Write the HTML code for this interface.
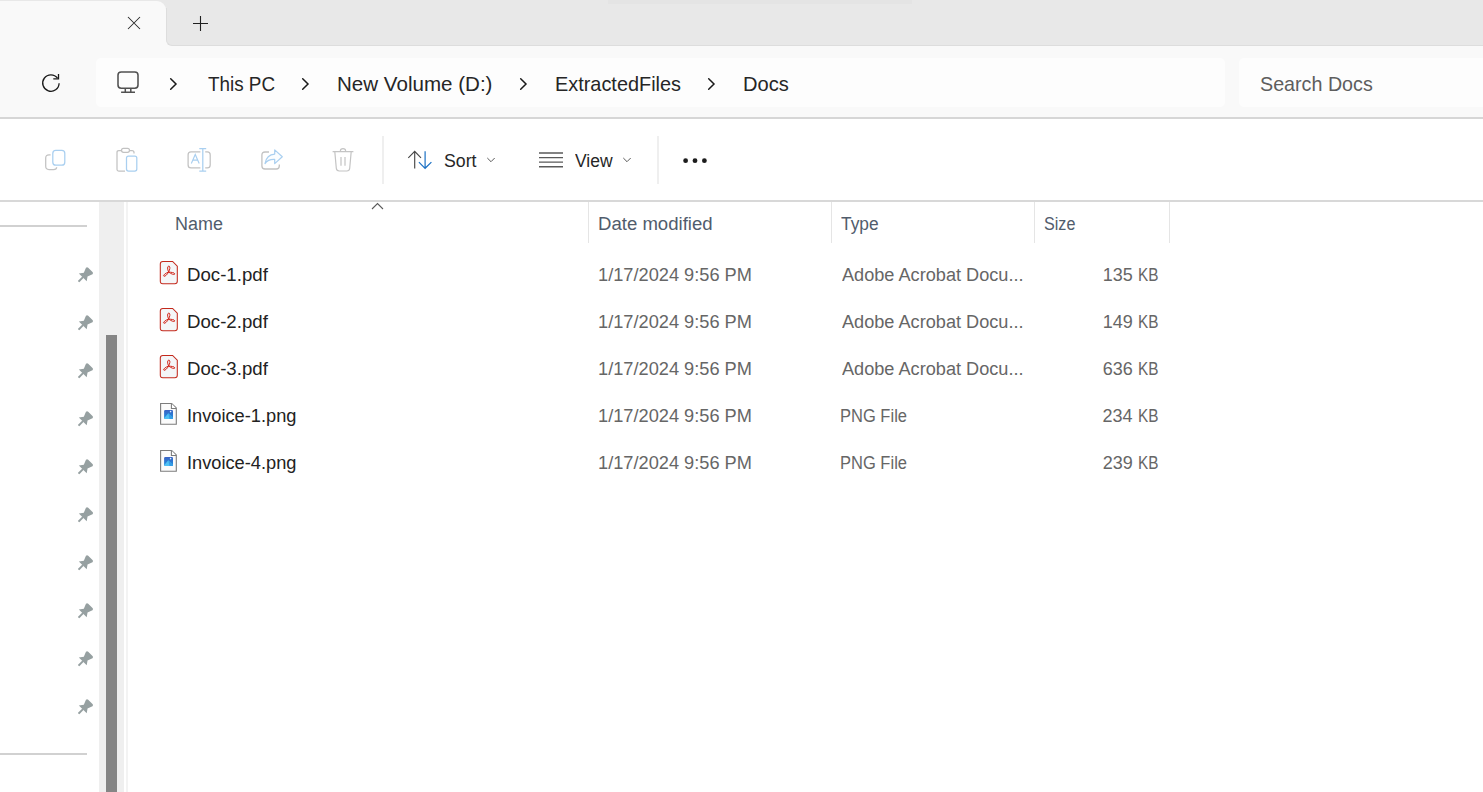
<!DOCTYPE html>
<html><head><meta charset="utf-8"><style>
html,body{margin:0;padding:0}
body{width:1483px;height:792px;overflow:hidden;position:relative;background:#ffffff;font-family:"Liberation Sans",sans-serif}
.a{position:absolute}
.t{position:absolute;white-space:nowrap;transform-origin:0 0}
.ic{position:absolute;overflow:visible}
</style></head><body>
<!-- tab strip -->
<div class="a" style="left:0;top:0;width:1483px;height:118px;background:#f9f9f9"></div>
<div class="a" style="left:0;top:0;width:1483px;height:10px;background:#e8e8e8"></div>
<div class="a" style="left:608px;top:0;width:304px;height:4px;background:#e4e4e4"></div>
<div class="a" style="left:166px;top:8px;width:1317px;height:37px;background:#e8e8e8;border-left:1px solid #dddddd;border-bottom:1px solid #dddddd;border-bottom-left-radius:6px"></div>
<div class="a" style="left:0;top:1px;width:166px;height:45px;background:#f9f9f9;border-top-right-radius:9px"></div>
<svg class="ic" style="left:127px;top:15.5px" width="14" height="14" viewBox="0 0 14 14"><path d="M1 1 L13 13 M13 1 L1 13" stroke="#2a2a2a" stroke-width="1.05"/></svg>
<svg class="ic" style="left:192px;top:15px" width="17" height="17" viewBox="0 0 17 17"><path d="M8.5 1 V16 M1 8.5 H16" stroke="#1f1f1f" stroke-width="1.1"/></svg>
<!-- address row -->
<svg class="ic" style="left:41px;top:73px" width="20" height="20" viewBox="0 0 20 20"><path d="M18.1 10.2 A8.2 8.2 0 1 1 16.5 5.2" fill="none" stroke="#1a1a1a" stroke-width="1.3"/><path d="M12.3 5.9 H17.5 V1" fill="none" stroke="#1a1a1a" stroke-width="1.3"/></svg>
<div class="a" style="left:96px;top:58px;width:1129px;height:49px;background:#fdfdfd;border-radius:5px"></div>
<div class="a" style="left:1239px;top:58px;width:260px;height:49px;background:#fdfdfd;border-radius:5px"></div>
<svg class="ic" style="left:116px;top:70px" width="24" height="24" viewBox="0 0 24 24"><rect x="2" y="1.9" width="20" height="16.4" rx="3.2" fill="none" stroke="#515151" stroke-width="1.55"/><path d="M9.3 18.3 V22 M14.8 18.3 V22 M5.1 22.3 H19" stroke="#515151" stroke-width="1.5"/></svg>
<svg class="ic" style="left:169px;top:77px" width="9" height="14" viewBox="0 0 9 14"><path d="M1.7 1.7 L7 7 L1.7 12.3" fill="none" stroke="#1a1a1a" stroke-width="1.5" stroke-linecap="round"/></svg><svg class="ic" style="left:301px;top:77px" width="9" height="14" viewBox="0 0 9 14"><path d="M1.7 1.7 L7 7 L1.7 12.3" fill="none" stroke="#1a1a1a" stroke-width="1.5" stroke-linecap="round"/></svg><svg class="ic" style="left:519px;top:77px" width="9" height="14" viewBox="0 0 9 14"><path d="M1.7 1.7 L7 7 L1.7 12.3" fill="none" stroke="#1a1a1a" stroke-width="1.5" stroke-linecap="round"/></svg><svg class="ic" style="left:707px;top:77px" width="9" height="14" viewBox="0 0 9 14"><path d="M1.7 1.7 L7 7 L1.7 12.3" fill="none" stroke="#1a1a1a" stroke-width="1.5" stroke-linecap="round"/></svg>
<div class="a" style="left:0;top:117px;width:1483px;height:2px;background:#d6d6d6"></div>
<!-- command bar -->
<div class="a" style="left:0;top:119px;width:1483px;height:81px;background:#ffffff"></div>
<svg class="ic" style="left:43px;top:148px" width="24" height="24" viewBox="0 0 24 24"><path d="M7.6 6.8 H6 Q2.7 6.8 2.7 10 V18.3 Q2.7 21.5 6 21.5 H10.5 Q13.6 21.5 13.7 19.2" fill="none" stroke="#c2c2c2" stroke-width="1.25"/><rect x="9.8" y="2.4" width="12" height="14.8" rx="3" fill="none" stroke="#a9cff0" stroke-width="1.25"/></svg>
<svg class="ic" style="left:115px;top:146px" width="24" height="27" viewBox="0 0 24 27"><path d="M6 4.5 H3.8 Q2 4.5 2 6.5 V23.5 Q2 25 3.8 25 H10" fill="none" stroke="#c2c2c2" stroke-width="1.25"/><path d="M15 4.5 H17 Q19 4.5 19 6.5 V7.4" fill="none" stroke="#c2c2c2" stroke-width="1.25"/><rect x="6.5" y="2.3" width="8" height="4" rx="2" fill="none" stroke="#c2c2c2" stroke-width="1.25"/><rect x="11.5" y="10" width="10.3" height="15" rx="2" fill="none" stroke="#a9cff0" stroke-width="1.25"/></svg>
<svg class="ic" style="left:186px;top:147px" width="26" height="26" viewBox="0 0 26 26"><path d="M14.4 4.9 H5 Q2.1 4.9 2.1 7.8 V17.9 Q2.1 20.8 5 20.8 H14.4 M19.2 4.9 H21.3 Q24.2 4.9 24.2 7.8 V17.9 Q24.2 20.8 21.3 20.8 H19.2" fill="none" stroke="#c2c2c2" stroke-width="1.25"/><path d="M16.8 1.6 V24.2 M13.3 1.6 H20.2 M13.3 24.2 H20.2" stroke="#a9cff0" stroke-width="1.25"/><path d="M5.3 16.4 L9.25 7.5 L13.2 16.4 M6.9 13.1 H11.6" fill="none" stroke="#a9cff0" stroke-width="1.15"/></svg>
<svg class="ic" style="left:259px;top:147px" width="26" height="26" viewBox="0 0 26 26"><path d="M10 5 H6 Q2.9 5 2.9 8 V19 Q2.9 22 6 22 H17.3 Q20.3 22 20.3 19 V17.5" fill="none" stroke="#c2c2c2" stroke-width="1.3"/><path d="M6 16.6 C7 11 10 7.3 15.7 7.1 V2.9 L23.3 9.7 L15.7 16.6 V12.4 C11 12.2 8 13.5 6 16.6 Z" fill="#fafdff" stroke="#a9cff0" stroke-width="1.2" stroke-linejoin="round"/></svg>
<svg class="ic" style="left:331px;top:146px" width="24" height="27" viewBox="0 0 24 27"><path d="M1.6 5.6 H22.4 M9.4 5.6 V4.8 Q9.4 2.6 12 2.6 Q14.6 2.6 14.6 4.8 V5.6 M3.8 5.6 L5.3 22.3 Q5.6 25 8.2 25 H15.8 Q18.4 25 18.7 22.3 L20.2 5.6 M10 11 V19.8 M14 11 V19.8" fill="none" stroke="#c4c4c4" stroke-width="1.2"/></svg>
<div class="a" style="left:382px;top:136px;width:2px;height:48px;background:#efefef"></div>
<svg class="ic" style="left:406px;top:149px" width="28" height="22" viewBox="0 0 28 22"><path d="M8.7 19.6 V2.6 M2.3 8.8 L8.7 2.4 L15 8.8" fill="none" stroke="#474747" stroke-width="1.15"/><path d="M19.1 2.2 V19 M12.9 13.1 L19.1 19.3 L25.4 13.1" fill="none" stroke="#1c71c4" stroke-width="1.2"/></svg>
<svg class="ic" style="left:486px;top:156px" width="10" height="8" viewBox="0 0 10 8"><path d="M1.3 2 L5 5.7 L8.7 2" fill="none" stroke="#505050" stroke-width="0.95"/></svg>
<svg class="ic" style="left:538px;top:150px" width="26" height="20" viewBox="0 0 26 20"><path d="M1 3 H25 M1 7.6 H25 M1 12.1 H25 M1 16.7 H25" stroke="#5a5a5a" stroke-width="1.4"/></svg>
<svg class="ic" style="left:622px;top:156px" width="10" height="8" viewBox="0 0 10 8"><path d="M1.3 2 L5 5.7 L8.7 2" fill="none" stroke="#505050" stroke-width="0.95"/></svg>
<div class="a" style="left:657px;top:136px;width:2px;height:48px;background:#efefef"></div>
<svg class="ic" style="left:680px;top:155px" width="30" height="12" viewBox="0 0 30 12"><circle cx="5.6" cy="5.7" r="2.4" fill="#1c1c1c"/><circle cx="15" cy="5.7" r="2.4" fill="#1c1c1c"/><circle cx="24.4" cy="5.7" r="2.4" fill="#1c1c1c"/></svg>
<div class="a" style="left:0;top:200px;width:1483px;height:2px;background:#d8d8d8"></div>
<!-- nav pane -->
<div class="a" style="left:0;top:225px;width:87px;height:2px;background:#d1d1d1"></div>
<div class="a" style="left:0;top:753px;width:87px;height:2px;background:#d1d1d1"></div>
<svg class="ic" style="left:76px;top:265px" width="18" height="18" viewBox="0 0 18 18"><g transform="translate(7.0 12.2) rotate(45) scale(1.05)" fill="#96a0a1"><path d="M-4.4 -8.4 Q-4.4 -9.9 -2.9 -9.9 L2.9 -9.9 Q4.4 -9.9 4.4 -8.4 L2.5 -3.6 L5.3 0.3 L-5.3 0.3 L-2.5 -3.6 Z"/><path d="M-0.9 0 L0.9 0 L0.9 5.8 Q0 6.6 -0.9 5.8 Z"/></g></svg><svg class="ic" style="left:76px;top:313px" width="18" height="18" viewBox="0 0 18 18"><g transform="translate(7.0 12.2) rotate(45) scale(1.05)" fill="#96a0a1"><path d="M-4.4 -8.4 Q-4.4 -9.9 -2.9 -9.9 L2.9 -9.9 Q4.4 -9.9 4.4 -8.4 L2.5 -3.6 L5.3 0.3 L-5.3 0.3 L-2.5 -3.6 Z"/><path d="M-0.9 0 L0.9 0 L0.9 5.8 Q0 6.6 -0.9 5.8 Z"/></g></svg><svg class="ic" style="left:76px;top:361px" width="18" height="18" viewBox="0 0 18 18"><g transform="translate(7.0 12.2) rotate(45) scale(1.05)" fill="#96a0a1"><path d="M-4.4 -8.4 Q-4.4 -9.9 -2.9 -9.9 L2.9 -9.9 Q4.4 -9.9 4.4 -8.4 L2.5 -3.6 L5.3 0.3 L-5.3 0.3 L-2.5 -3.6 Z"/><path d="M-0.9 0 L0.9 0 L0.9 5.8 Q0 6.6 -0.9 5.8 Z"/></g></svg><svg class="ic" style="left:76px;top:409px" width="18" height="18" viewBox="0 0 18 18"><g transform="translate(7.0 12.2) rotate(45) scale(1.05)" fill="#96a0a1"><path d="M-4.4 -8.4 Q-4.4 -9.9 -2.9 -9.9 L2.9 -9.9 Q4.4 -9.9 4.4 -8.4 L2.5 -3.6 L5.3 0.3 L-5.3 0.3 L-2.5 -3.6 Z"/><path d="M-0.9 0 L0.9 0 L0.9 5.8 Q0 6.6 -0.9 5.8 Z"/></g></svg><svg class="ic" style="left:76px;top:457px" width="18" height="18" viewBox="0 0 18 18"><g transform="translate(7.0 12.2) rotate(45) scale(1.05)" fill="#96a0a1"><path d="M-4.4 -8.4 Q-4.4 -9.9 -2.9 -9.9 L2.9 -9.9 Q4.4 -9.9 4.4 -8.4 L2.5 -3.6 L5.3 0.3 L-5.3 0.3 L-2.5 -3.6 Z"/><path d="M-0.9 0 L0.9 0 L0.9 5.8 Q0 6.6 -0.9 5.8 Z"/></g></svg><svg class="ic" style="left:76px;top:505px" width="18" height="18" viewBox="0 0 18 18"><g transform="translate(7.0 12.2) rotate(45) scale(1.05)" fill="#96a0a1"><path d="M-4.4 -8.4 Q-4.4 -9.9 -2.9 -9.9 L2.9 -9.9 Q4.4 -9.9 4.4 -8.4 L2.5 -3.6 L5.3 0.3 L-5.3 0.3 L-2.5 -3.6 Z"/><path d="M-0.9 0 L0.9 0 L0.9 5.8 Q0 6.6 -0.9 5.8 Z"/></g></svg><svg class="ic" style="left:76px;top:553px" width="18" height="18" viewBox="0 0 18 18"><g transform="translate(7.0 12.2) rotate(45) scale(1.05)" fill="#96a0a1"><path d="M-4.4 -8.4 Q-4.4 -9.9 -2.9 -9.9 L2.9 -9.9 Q4.4 -9.9 4.4 -8.4 L2.5 -3.6 L5.3 0.3 L-5.3 0.3 L-2.5 -3.6 Z"/><path d="M-0.9 0 L0.9 0 L0.9 5.8 Q0 6.6 -0.9 5.8 Z"/></g></svg><svg class="ic" style="left:76px;top:601px" width="18" height="18" viewBox="0 0 18 18"><g transform="translate(7.0 12.2) rotate(45) scale(1.05)" fill="#96a0a1"><path d="M-4.4 -8.4 Q-4.4 -9.9 -2.9 -9.9 L2.9 -9.9 Q4.4 -9.9 4.4 -8.4 L2.5 -3.6 L5.3 0.3 L-5.3 0.3 L-2.5 -3.6 Z"/><path d="M-0.9 0 L0.9 0 L0.9 5.8 Q0 6.6 -0.9 5.8 Z"/></g></svg><svg class="ic" style="left:76px;top:649px" width="18" height="18" viewBox="0 0 18 18"><g transform="translate(7.0 12.2) rotate(45) scale(1.05)" fill="#96a0a1"><path d="M-4.4 -8.4 Q-4.4 -9.9 -2.9 -9.9 L2.9 -9.9 Q4.4 -9.9 4.4 -8.4 L2.5 -3.6 L5.3 0.3 L-5.3 0.3 L-2.5 -3.6 Z"/><path d="M-0.9 0 L0.9 0 L0.9 5.8 Q0 6.6 -0.9 5.8 Z"/></g></svg><svg class="ic" style="left:76px;top:697px" width="18" height="18" viewBox="0 0 18 18"><g transform="translate(7.0 12.2) rotate(45) scale(1.05)" fill="#96a0a1"><path d="M-4.4 -8.4 Q-4.4 -9.9 -2.9 -9.9 L2.9 -9.9 Q4.4 -9.9 4.4 -8.4 L2.5 -3.6 L5.3 0.3 L-5.3 0.3 L-2.5 -3.6 Z"/><path d="M-0.9 0 L0.9 0 L0.9 5.8 Q0 6.6 -0.9 5.8 Z"/></g></svg>
<div class="a" style="left:99px;top:202px;width:25px;height:590px;background:#efefef"></div>
<div class="a" style="left:106px;top:335px;width:11px;height:457px;background:#858585"></div>
<div class="a" style="left:126px;top:202px;width:2px;height:590px;background:#f3f3f3"></div>
<!-- header -->
<svg class="ic" style="left:371px;top:202px" width="13" height="9" viewBox="0 0 13 9"><path d="M1 7 L6.5 1.5 L12 7" fill="none" stroke="#5a5a5a" stroke-width="1.1"/></svg>
<div class="a" style="left:588px;top:202px;width:1px;height:41px;background:#e5e5e5"></div>
<div class="a" style="left:831px;top:202px;width:1px;height:41px;background:#e5e5e5"></div>
<div class="a" style="left:1034px;top:202px;width:1px;height:41px;background:#e5e5e5"></div>
<div class="a" style="left:1169px;top:202px;width:1px;height:41px;background:#e5e5e5"></div>
<svg class="ic" style="left:159px;top:260px" width="20" height="26" viewBox="0 0 20 26"><path d="M3.8 1.5 H13.6 L18.3 6.2 V21.3 Q18.3 23.8 15.8 23.8 H3.8 Q1.3 23.8 1.3 21.3 V4 Q1.3 1.5 3.8 1.5 Z" fill="#f4f6f8" stroke="#c3291c" stroke-width="1.05"/><path d="M9.6 12 C8.3 9.2 8.2 6.1 9.8 6.1 C11.4 6.1 11.1 9.2 9.6 12 Z M9.6 12 C8.2 14.5 6.2 16.7 4.9 16.2 C3.8 15.6 5.6 13.6 9.6 12 Z M9.6 12 C12 12.4 15.6 12.4 15.7 13.8 C15.8 15.3 12.6 14.3 9.6 12 Z" fill="none" stroke="#d3271c" stroke-width="1"/></svg><svg class="ic" style="left:159px;top:307px" width="20" height="26" viewBox="0 0 20 26"><path d="M3.8 1.5 H13.6 L18.3 6.2 V21.3 Q18.3 23.8 15.8 23.8 H3.8 Q1.3 23.8 1.3 21.3 V4 Q1.3 1.5 3.8 1.5 Z" fill="#f4f6f8" stroke="#c3291c" stroke-width="1.05"/><path d="M9.6 12 C8.3 9.2 8.2 6.1 9.8 6.1 C11.4 6.1 11.1 9.2 9.6 12 Z M9.6 12 C8.2 14.5 6.2 16.7 4.9 16.2 C3.8 15.6 5.6 13.6 9.6 12 Z M9.6 12 C12 12.4 15.6 12.4 15.7 13.8 C15.8 15.3 12.6 14.3 9.6 12 Z" fill="none" stroke="#d3271c" stroke-width="1"/></svg><svg class="ic" style="left:159px;top:354px" width="20" height="26" viewBox="0 0 20 26"><path d="M3.8 1.5 H13.6 L18.3 6.2 V21.3 Q18.3 23.8 15.8 23.8 H3.8 Q1.3 23.8 1.3 21.3 V4 Q1.3 1.5 3.8 1.5 Z" fill="#f4f6f8" stroke="#c3291c" stroke-width="1.05"/><path d="M9.6 12 C8.3 9.2 8.2 6.1 9.8 6.1 C11.4 6.1 11.1 9.2 9.6 12 Z M9.6 12 C8.2 14.5 6.2 16.7 4.9 16.2 C3.8 15.6 5.6 13.6 9.6 12 Z M9.6 12 C12 12.4 15.6 12.4 15.7 13.8 C15.8 15.3 12.6 14.3 9.6 12 Z" fill="none" stroke="#d3271c" stroke-width="1"/></svg><svg class="ic" style="left:159px;top:401px" width="20" height="26" viewBox="0 0 20 26"><path d="M1.6 2.5 H12.7 L17.3 7.1 V23.3 H1.6 Z" fill="#fbfbfb" stroke="#7c7c7c" stroke-width="1.1"/><path d="M12.4 2.6 V7.4 H17.2" fill="#ffffff" stroke="#7c7c7c" stroke-width="1.05"/><defs><linearGradient id="pg" x1="0" y1="0" x2="0" y2="1"><stop offset="0" stop-color="#3a62c4"/><stop offset="1" stop-color="#1f8fe0"/></linearGradient></defs><rect x="5.1" y="9" width="8.9" height="8.9" rx="1.2" fill="url(#pg)"/><path d="M5.3 17 L9.3 12.2 L13.9 16.6 V17.9 H5.6 Z" fill="#4fc0f3"/><path d="M9.3 12.2 L13.9 16.6 V17.9 H10.5 Z" fill="#2a8fe0" opacity="0.7"/><circle cx="11.6" cy="10.6" r="0.8" fill="#dbefff"/></svg><svg class="ic" style="left:159px;top:448px" width="20" height="26" viewBox="0 0 20 26"><path d="M1.6 2.5 H12.7 L17.3 7.1 V23.3 H1.6 Z" fill="#fbfbfb" stroke="#7c7c7c" stroke-width="1.1"/><path d="M12.4 2.6 V7.4 H17.2" fill="#ffffff" stroke="#7c7c7c" stroke-width="1.05"/><defs><linearGradient id="pg" x1="0" y1="0" x2="0" y2="1"><stop offset="0" stop-color="#3a62c4"/><stop offset="1" stop-color="#1f8fe0"/></linearGradient></defs><rect x="5.1" y="9" width="8.9" height="8.9" rx="1.2" fill="url(#pg)"/><path d="M5.3 17 L9.3 12.2 L13.9 16.6 V17.9 H5.6 Z" fill="#4fc0f3"/><path d="M9.3 12.2 L13.9 16.6 V17.9 H10.5 Z" fill="#2a8fe0" opacity="0.7"/><circle cx="11.6" cy="10.6" r="0.8" fill="#dbefff"/></svg>
<div class="t" style="left:207.62px;top:73.22px;font-size:21px;line-height:21px;color:#262626;transform:scaleX(0.8980);">This PC</div><div class="t" style="left:337.15px;top:73.22px;font-size:21px;line-height:21px;color:#262626;transform:scaleX(0.9794);">New Volume (D:)</div><div class="t" style="left:554.81px;top:73.22px;font-size:21px;line-height:21px;color:#262626;transform:scaleX(0.9470);">ExtractedFiles</div><div class="t" style="left:742.59px;top:73.22px;font-size:21px;line-height:21px;color:#262626;transform:scaleX(0.9568);">Docs</div><div class="t" style="left:1259.91px;top:72.72px;font-size:21px;line-height:21px;color:#5e5e5e;transform:scaleX(0.9380);">Search Docs</div><div class="t" style="left:443.90px;top:151.56px;font-size:18px;line-height:18px;color:#262626;transform:scaleX(0.9831);">Sort</div><div class="t" style="left:575.11px;top:151.56px;font-size:18px;line-height:18px;color:#262626;transform:scaleX(0.9713);">View</div><div class="t" style="left:174.56px;top:214.76px;font-size:18px;line-height:18px;color:#515c6c;transform:scaleX(0.9974);">Name</div><div class="t" style="left:597.81px;top:214.76px;font-size:18px;line-height:18px;color:#515c6c;transform:scaleX(1.0318);">Date modified</div><div class="t" style="left:840.75px;top:214.76px;font-size:18px;line-height:18px;color:#515c6c;transform:scaleX(0.9630);">Type</div><div class="t" style="left:1043.77px;top:214.76px;font-size:18px;line-height:18px;color:#515c6c;transform:scaleX(0.8955);">Size</div><div class="t" style="left:186.91px;top:265.56px;font-size:18px;line-height:18px;color:#222222;transform:scaleX(1.0355);">Doc-1.pdf</div><div class="t" style="left:598.33px;top:265.56px;font-size:18px;line-height:18px;color:#666666;transform:scaleX(1.0120);">1/17/2024 9:56 PM</div><div class="t" style="left:841.50px;top:265.56px;font-size:18px;line-height:18px;color:#666666;transform:scaleX(1.0080);">Adobe Acrobat Docu...</div><div class="t" style="left:1102.70px;top:265.56px;font-size:18px;line-height:18px;color:#666666;">135</div><div class="t" style="left:1137.77px;top:265.56px;font-size:18px;line-height:18px;color:#666666;transform:scaleX(0.8519);">KB</div><div class="t" style="left:186.91px;top:312.56px;font-size:18px;line-height:18px;color:#222222;transform:scaleX(1.0355);">Doc-2.pdf</div><div class="t" style="left:598.33px;top:312.56px;font-size:18px;line-height:18px;color:#666666;transform:scaleX(1.0120);">1/17/2024 9:56 PM</div><div class="t" style="left:841.50px;top:312.56px;font-size:18px;line-height:18px;color:#666666;transform:scaleX(1.0080);">Adobe Acrobat Docu...</div><div class="t" style="left:1102.79px;top:312.56px;font-size:18px;line-height:18px;color:#666666;">149</div><div class="t" style="left:1137.77px;top:312.56px;font-size:18px;line-height:18px;color:#666666;transform:scaleX(0.8519);">KB</div><div class="t" style="left:186.91px;top:359.56px;font-size:18px;line-height:18px;color:#222222;transform:scaleX(1.0355);">Doc-3.pdf</div><div class="t" style="left:598.33px;top:359.56px;font-size:18px;line-height:18px;color:#666666;transform:scaleX(1.0120);">1/17/2024 9:56 PM</div><div class="t" style="left:841.50px;top:359.56px;font-size:18px;line-height:18px;color:#666666;transform:scaleX(1.0080);">Adobe Acrobat Docu...</div><div class="t" style="left:1102.70px;top:359.56px;font-size:18px;line-height:18px;color:#666666;">636</div><div class="t" style="left:1137.77px;top:359.56px;font-size:18px;line-height:18px;color:#666666;transform:scaleX(0.8519);">KB</div><div class="t" style="left:186.76px;top:406.56px;font-size:18px;line-height:18px;color:#222222;transform:scaleX(1.0123);">Invoice-1.png</div><div class="t" style="left:598.33px;top:406.56px;font-size:18px;line-height:18px;color:#666666;transform:scaleX(1.0120);">1/17/2024 9:56 PM</div><div class="t" style="left:840.18px;top:406.56px;font-size:18px;line-height:18px;color:#666666;transform:scaleX(0.9174);">PNG File</div><div class="t" style="left:1102.52px;top:406.56px;font-size:18px;line-height:18px;color:#666666;">234</div><div class="t" style="left:1137.77px;top:406.56px;font-size:18px;line-height:18px;color:#666666;transform:scaleX(0.8519);">KB</div><div class="t" style="left:186.76px;top:453.56px;font-size:18px;line-height:18px;color:#222222;transform:scaleX(1.0123);">Invoice-4.png</div><div class="t" style="left:598.33px;top:453.56px;font-size:18px;line-height:18px;color:#666666;transform:scaleX(1.0120);">1/17/2024 9:56 PM</div><div class="t" style="left:840.18px;top:453.56px;font-size:18px;line-height:18px;color:#666666;transform:scaleX(0.9174);">PNG File</div><div class="t" style="left:1102.79px;top:453.56px;font-size:18px;line-height:18px;color:#666666;">239</div><div class="t" style="left:1137.77px;top:453.56px;font-size:18px;line-height:18px;color:#666666;transform:scaleX(0.8519);">KB</div>
</body></html>
